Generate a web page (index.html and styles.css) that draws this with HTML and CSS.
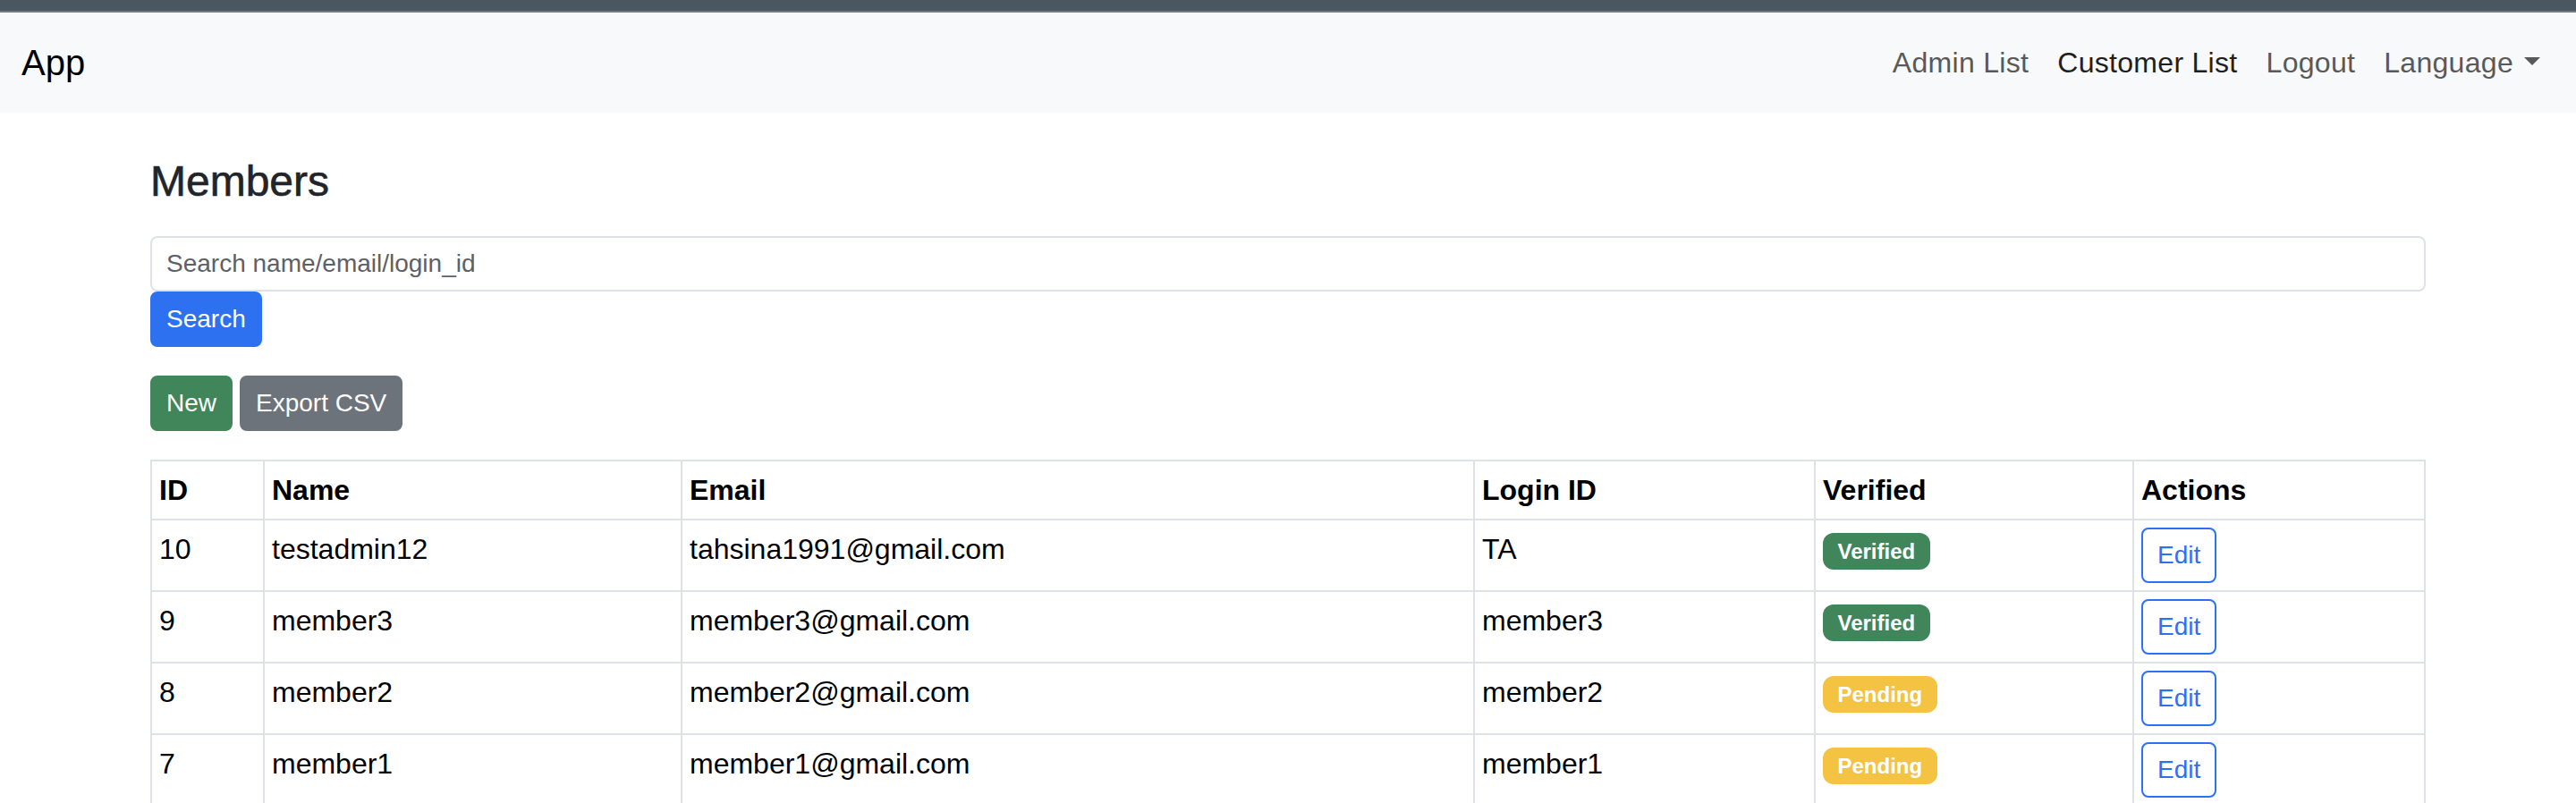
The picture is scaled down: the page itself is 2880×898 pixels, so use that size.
FILE: index.html
```html
<!DOCTYPE html>
<html lang="en">
<head>
<meta charset="utf-8">
<title>Members</title>
<link rel="stylesheet" href="styles.css">
</head>
<body>
<div class="topbar"></div>
<nav class="navbar">
  <a class="brand" href="#">App</a>
  <ul class="nav">
    <li><a class="nav-link" href="#">Admin List</a></li>
    <li><a class="nav-link active" href="#">Customer List</a></li>
    <li><a class="nav-link" href="#">Logout</a></li>
    <li><a class="nav-link dropdown-toggle" href="#">Language</a></li>
  </ul>
</nav>
<main class="container">
  <h1 class="page-title">Members</h1>
  <form class="search-form">
    <input class="search-input" type="text" placeholder="Search name/email/login_id">
    <button class="btn btn-primary" type="button">Search</button>
  </form>
  <div class="toolbar">
    <a class="btn btn-success" href="#">New</a>
    <a class="btn btn-secondary" href="#">Export CSV</a>
  </div>
  <table class="members">
    <colgroup>
      <col class="col-id"><col class="col-name"><col class="col-email"><col class="col-login"><col class="col-verified"><col class="col-actions">
    </colgroup>
    <thead>
      <tr><th>ID</th><th>Name</th><th>Email</th><th>Login ID</th><th>Verified</th><th>Actions</th></tr>
    </thead>
    <tbody>
      <tr><td>10</td><td>testadmin12</td><td>tahsina1991@gmail.com</td><td>TA</td><td><span class="badge badge-success">Verified</span></td><td><a class="btn-edit" href="#">Edit</a></td></tr>
      <tr><td>9</td><td>member3</td><td>member3@gmail.com</td><td>member3</td><td><span class="badge badge-success">Verified</span></td><td><a class="btn-edit" href="#">Edit</a></td></tr>
      <tr><td>8</td><td>member2</td><td>member2@gmail.com</td><td>member2</td><td><span class="badge badge-warning">Pending</span></td><td><a class="btn-edit" href="#">Edit</a></td></tr>
      <tr><td>7</td><td>member1</td><td>member1@gmail.com</td><td>member1</td><td><span class="badge badge-warning">Pending</span></td><td><a class="btn-edit" href="#">Edit</a></td></tr>
    </tbody>
  </table>
</main>
</body>
</html>
```
FILE: styles.css
```css
* { box-sizing: border-box; }

body {
  margin: 0;
  font-family: "Liberation Sans", Arial, sans-serif;
  font-size: 32px;
  line-height: 48px;
  color: #212529;
  background: #fff;
}

a { text-decoration: none; }

.topbar {
  height: 14px;
  background: #4a5660;
  border-bottom: 2px solid #6f7a83;
}

.navbar {
  display: flex;
  align-items: center;
  justify-content: space-between;
  background: #f8f9fa;
  padding: 16px 24px;
}

.brand {
  font-size: 40px;
  line-height: 60px;
  padding: 10px 0;
  color: #000;
}

.nav {
  display: flex;
  list-style: none;
  margin: 0;
  padding: 0;
}

.nav-link {
  display: block;
  padding: 16px 16px;
  color: #595959;
  letter-spacing: 0.3px;
}

.nav-link.active { color: #1f1f1f; }

.dropdown-toggle::after {
  content: "";
  display: inline-block;
  width: 0;
  height: 0;
  margin-left: 12px;
  vertical-align: 8px;
  border-top: 9.6px solid #595959;
  border-left: 9.6px solid transparent;
  border-right: 9.6px solid transparent;
}

.container {
  padding: 0 168px;
  margin-top: 48px;
}

.page-title {
  font-size: 48px;
  font-weight: 500;
  line-height: 57.6px;
  margin: 0 0 32px;
  color: #212529;
  -webkit-text-stroke: 0.6px #212529;
}

.search-form { margin: 0 0 32px; }

.search-input {
  display: block;
  width: 100%;
  height: 62px;
  font-family: inherit;
  font-size: 28px;
  line-height: 42px;
  padding: 8px 16px;
  border: 2px solid #dee2e6;
  border-radius: 8px;
  color: #212529;
  background: #fff;
}

.search-input::placeholder { color: #5d6166; }

.btn {
  display: inline-block;
  font-family: inherit;
  font-size: 28px;
  line-height: 42px;
  padding: 8px 16px;
  border: 2px solid transparent;
  border-radius: 8px;
  color: #fff;
  cursor: pointer;
}

.btn-primary { background: #2e71f0; border-color: #2e71f0; }
.btn-success { background: #41855a; border-color: #41855a; }
.btn-secondary { background: #6c737b; border-color: #6c737b; }

.toolbar {
  display: flex;
  gap: 8px;
  margin-bottom: 32px;
}

.members {
  width: 100%;
  table-layout: fixed;
  border-collapse: collapse;
  color: #000;
}

.col-id { width: 126px; }
.col-name { width: 467px; }
.col-email { width: 886px; }
.col-login { width: 381px; }
.col-verified { width: 356px; }

.members th,
.members td {
  border: 2px solid #dee2e6;
  padding: 8px;
  text-align: left;
  vertical-align: top;
  line-height: 48px;
}

.members th { font-weight: 700; }

.badge {
  display: inline-block;
  font-size: 24px;
  font-weight: 700;
  line-height: 1;
  padding: 8.4px 16.5px;
  border-radius: 12px;
  color: #fff;
}

.badge-success { background: #41855a; }
.badge-warning { background: #f5c342; }

.btn-edit {
  display: inline-block;
  font-size: 28px;
  line-height: 42px;
  padding: 8px 16px;
  border: 2px solid #2e71f0;
  border-radius: 8px;
  color: #2e71f0;
}
```
